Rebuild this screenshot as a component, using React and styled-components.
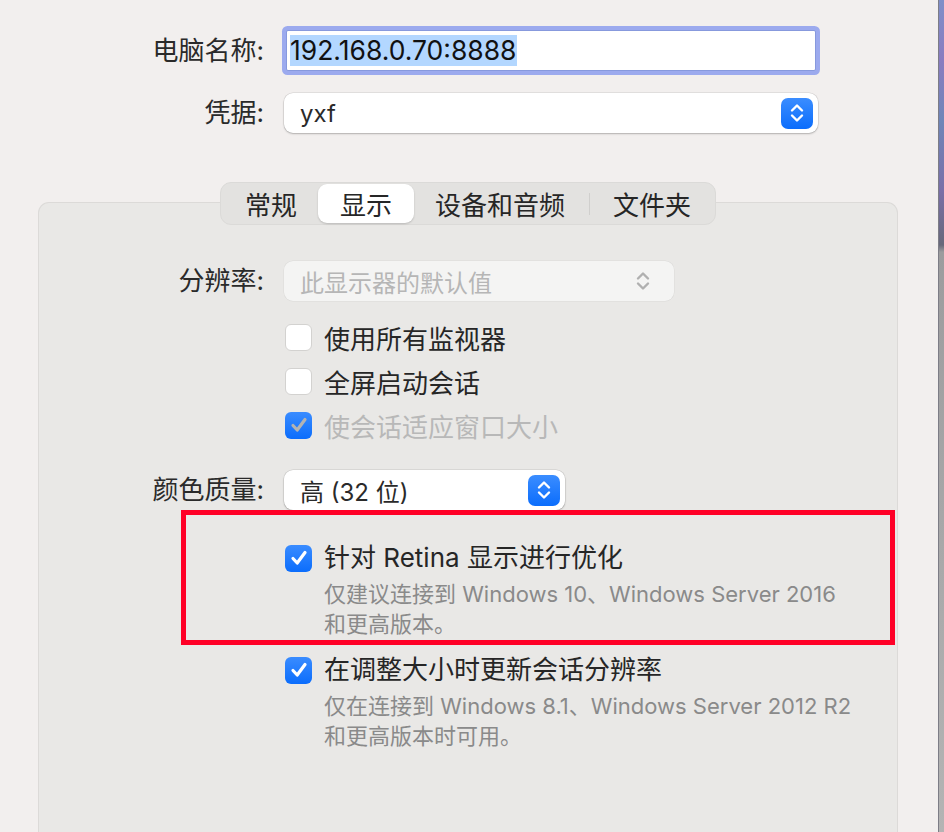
import React from 'react';
import styled, { createGlobalStyle } from 'styled-components';

const GlobalStyle = createGlobalStyle`
  html, body {
    margin: 0;
    padding: 0;
    background: #f2efee;
  }
  body {
    font-family: Inter, "Noto Sans CJK SC", sans-serif;
    color: #262626;
    -webkit-font-smoothing: antialiased;
  }
`;

const Screen = styled.div`
  display: flex;
  width: 944px;
  height: 832px;
  overflow: hidden;
`;

const Window = styled.div`
  flex: 0 0 938px;
  background: #f2efee;
  display: flex;
  flex-direction: column;
`;

const Desktop = styled.div`
  flex: 1;
  border-left: 1px solid #7d7d86;
  background: linear-gradient(
    to bottom,
    #7f8fc8 0,
    #8a7cc0 60px,
    #6f86b8 120px,
    #7a6fa8 190px,
    #67687a 245px,
    #9c9c9e 252px,
    #b4b4b4 100%
  );
`;

const TopForm = styled.div`
  display: flex;
  flex-direction: column;
  gap: 22px;
  padding-top: 30px;
`;

const FormRow = styled.div`
  display: grid;
  grid-template-columns: ${p => p.$label}px auto;
  column-gap: 20px;
  align-items: center;
  margin-top: ${p => p.$top || 0}px;
`;

const Label = styled.span`
  text-align: right;
  font-size: 26px;
  line-height: 30px;
  color: #2a2a2a;
`;

const TextField = styled.div`
  width: 530px;
  height: 41px;
  box-sizing: border-box;
  margin-left: 2px;
  background: #fff;
  border: 1px solid #8799dd;
  box-shadow: 0 0 0 4px #9caaee;
  border-radius: 2px;
  display: flex;
  align-items: center;
  padding-left: 3px;
`;

const Selected = styled.span`
  background: #b3d7ff;
  font-size: 26.5px;
  line-height: 31px;
  color: #111;
`;

const Popup = styled.div`
  width: ${p => p.$width}px;
  height: 40px;
  box-sizing: border-box;
  background: ${p => (p.$disabled ? '#f4f4f3' : '#fff')};
  border-radius: 9px;
  box-shadow: ${p =>
    p.$disabled
      ? '0 0 0 0.5px rgba(0,0,0,0.06)'
      : '0 0 0 0.5px rgba(0,0,0,0.12), 0 1px 2px rgba(0,0,0,0.22)'};
  display: flex;
  align-items: center;
  justify-content: space-between;
  padding: 0 5px 0 16px;
  font-size: 24px;
  color: ${p => (p.$disabled ? '#b6b6b6' : '#2a2a2a')};
`;

const Stepper = styled.div`
  width: 32px;
  height: 31px;
  border-radius: 7px;
  background: ${p => (p.$plain ? 'transparent' : 'linear-gradient(#3b8dff, #0b6dfc)')};
  display: flex;
  align-items: center;
  justify-content: center;
  margin-right: ${p => (p.$plain ? 10 : 0)}px;
`;

const Chevrons = ({ color }) => (
  <svg width="16" height="24" viewBox="0 0 16 24" fill="none">
    <path
      d="M3 9.5 L8 4.5 L13 9.5 M3 14.5 L8 19.5 L13 14.5"
      stroke={color}
      strokeWidth="2.4"
      strokeLinecap="round"
      strokeLinejoin="round"
    />
  </svg>
);

const Panel = styled.div`
  margin: 69px 0 0 38px;
  width: 858px;
  flex: 1;
  background: #e9e8e6;
  border: 1px solid #dcdad8;
  border-bottom: none;
  border-radius: 11px 11px 0 0;
  display: flex;
  flex-direction: column;
`;

const Tabs = styled.div`
  align-self: center;
  margin-top: -21px;
  height: 43px;
  box-sizing: border-box;
  display: flex;
  align-items: center;
  padding: 0 2px;
  background: #e3e2e0;
  border: 1px solid #dbdad8;
  border-radius: 11px;
`;

const Tab = styled.div`
  height: 39px;
  padding: 0 21.5px;
  display: flex;
  align-items: center;
  font-size: 26px;
  color: #262626;
  border-radius: 9px;
  background: ${p => (p.$active ? '#fff' : 'transparent')};
  box-shadow: ${p => (p.$active ? '0 1px 2px rgba(0,0,0,0.18)' : 'none')};
`;

const TabDivider = styled.div`
  width: 1px;
  height: 22px;
  background: #d0cfcd;
  margin: 0 2px;
`;

const Checks = styled.div`
  display: flex;
  flex-direction: column;
  margin: 14px 0 23px 246px;
`;

const CheckRow = styled.div`
  display: flex;
  align-items: center;
  gap: 12px;
  height: 44px;
  font-size: 26px;
  color: ${p => (p.$disabled ? '#b8b8b8' : '#262626')};
`;

const Box = styled.div`
  flex: 0 0 27px;
  width: 27px;
  height: 27px;
  box-sizing: border-box;
  border-radius: 6px;
  display: flex;
  align-items: center;
  justify-content: center;
  background: ${p =>
    p.$checked ? 'linear-gradient(#3a8cff, #0b6dfc)' : p.$disabled ? '#efeeed' : '#fff'};
  border: ${p => (p.$checked ? 'none' : '1px solid #d3d2d0')};
`;

const Tick = ({ color }) => (
  <svg width="20" height="20" viewBox="0 0 20 20" fill="none">
    <path
      d="M4 10.5 L8.2 15 L16 4.5"
      stroke={color}
      strokeWidth="3.2"
      strokeLinecap="round"
      strokeLinejoin="round"
    />
  </svg>
);

const Checkbox = ({ checked, disabled }) => (
  <Box $checked={checked} $disabled={disabled}>
    {checked && <Tick color={disabled ? '#b3b3b3' : '#fff'} />}
  </Box>
);

const Highlight = styled.div`
  margin-left: 142px;
  width: 714px;
  box-sizing: border-box;
  border: 5px solid #ff0027;
  padding: 28px 0 1px 99px;
`;

const Option = styled.div`
  display: grid;
  grid-template-columns: 27px auto;
  column-gap: 12px;
  align-items: center;
  margin-left: ${p => p.$indent || 0}px;
  margin-top: ${p => p.$top || 0}px;
`;

const OptionTitle = styled.span`
  font-size: 26px;
  line-height: 30px;
  color: #262626;
`;

const Note = styled.div`
  grid-column: 2;
  margin-top: 6px;
  font-size: 22px;
  line-height: 30px;
  color: #8a8a8a;
`;

export default function App() {
  return (
    <>
      <GlobalStyle />
      <Screen>
        <Window>
          <TopForm>
            <FormRow $label={264}>
              <Label>电脑名称:</Label>
              <TextField>
                <Selected>192.168.0.70:8888</Selected>
              </TextField>
            </FormRow>
            <FormRow $label={264}>
              <Label>凭据:</Label>
              <Popup $width={534}>
                <span>yxf</span>
                <Stepper>
                  <Chevrons color="#fff" />
                </Stepper>
              </Popup>
            </FormRow>
          </TopForm>

          <Panel>
            <Tabs>
              <Tab>常规</Tab>
              <Tab $active>显示</Tab>
              <Tab>设备和音频</Tab>
              <TabDivider />
              <Tab>文件夹</Tab>
            </Tabs>

            <FormRow $label={225} $top={36}>
              <Label>分辨率:</Label>
              <Popup $width={390} $disabled>
                <span>此显示器的默认值</span>
                <Stepper $plain>
                  <Chevrons color="#b0b0b0" />
                </Stepper>
              </Popup>
            </FormRow>

            <Checks>
              <CheckRow>
                <Checkbox />
                使用所有监视器
              </CheckRow>
              <CheckRow>
                <Checkbox />
                全屏启动会话
              </CheckRow>
              <CheckRow $disabled>
                <Checkbox checked disabled />
                使会话适应窗口大小
              </CheckRow>
            </Checks>

            <FormRow $label={225}>
              <Label>颜色质量:</Label>
              <Popup $width={281}>
                <span>高 (32 位)</span>
                <Stepper>
                  <Chevrons color="#fff" />
                </Stepper>
              </Popup>
            </FormRow>

            <Highlight>
              <Option>
                <Checkbox checked />
                <OptionTitle>针对 Retina 显示进行优化</OptionTitle>
                <Note>
                  仅建议连接到 Windows 10、Windows Server 2016
                  <br />
                  和更高版本。
                </Note>
              </Option>
            </Highlight>

            <Option $indent={246} $top={10}>
              <Checkbox checked />
              <OptionTitle>在调整大小时更新会话分辨率</OptionTitle>
              <Note>
                仅在连接到 Windows 8.1、Windows Server 2012 R2
                <br />
                和更高版本时可用。
              </Note>
            </Option>
          </Panel>
        </Window>
        <Desktop />
      </Screen>
    </>
  );
}
